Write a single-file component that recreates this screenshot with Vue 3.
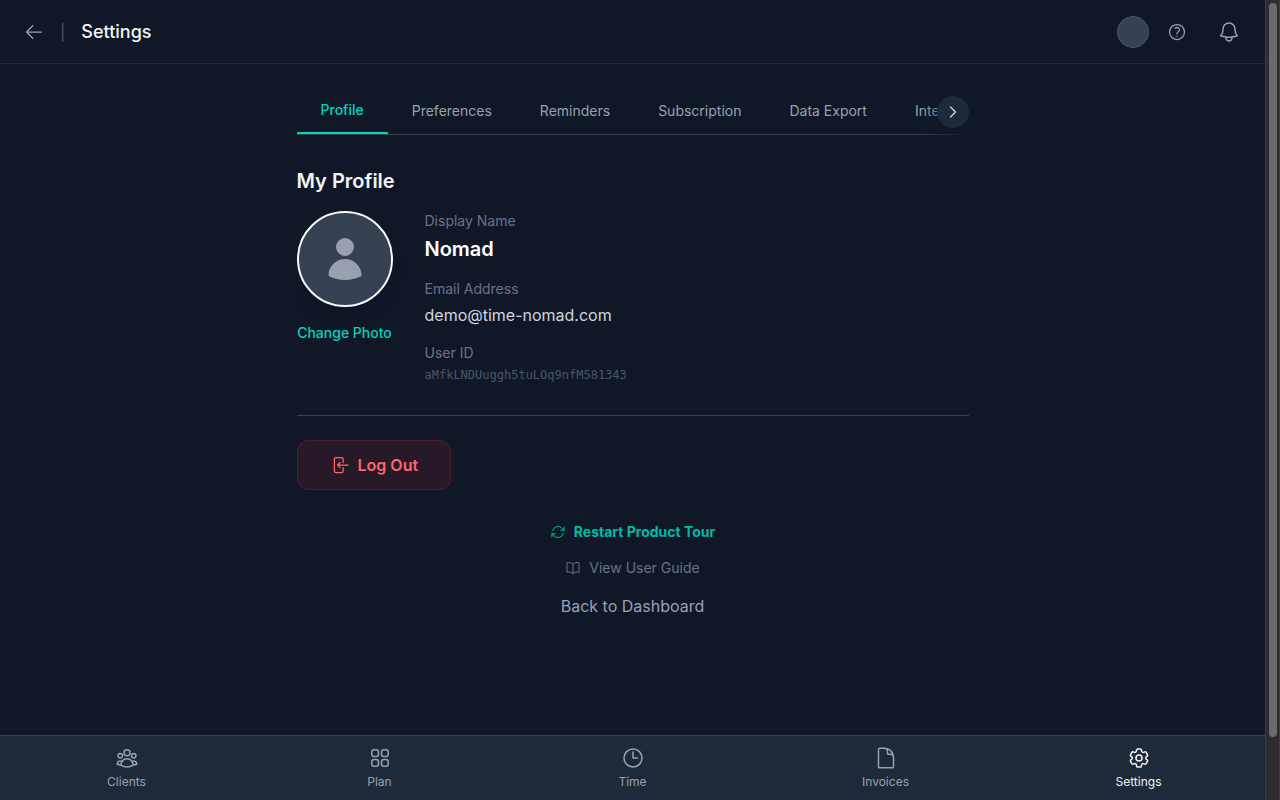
<template>
  <div class="app-shell">
    <div class="page">
      <header class="topbar">
        <div class="topbar-left">
          <button class="icon-btn" type="button" aria-label="Back">
            <svg class="icon icon-md" viewBox="0 0 24 24"><path d="M10.5 19.5 3 12m0 0 7.5-7.5M3 12h18" /></svg>
          </button>
          <span class="divider">|</span>
          <h1>Settings</h1>
        </div>
        <div class="topbar-right">
          <div class="account">
            <button class="avatar-small" type="button" aria-label="Account"></button>
            <button class="icon-btn help-btn" type="button" aria-label="Help">
              <svg class="icon icon-md" viewBox="0 0 24 24">
                <path d="M9.879 7.519c1.171-1.025 3.071-1.025 4.242 0 1.172 1.025 1.172 2.687 0 3.712-.203.179-.43.326-.67.442-.745.361-1.45.999-1.45 1.827v.75M21 12a9 9 0 1 1-18 0 9 9 0 0 1 18 0Zm-9 5.25h.008v.008H12v-.008Z" />
              </svg>
            </button>
          </div>
          <button class="icon-btn bell-btn" type="button" aria-label="Notifications">
            <svg class="icon icon-lg" viewBox="0 0 24 24">
              <path d="M14.857 17.082a23.848 23.848 0 0 0 5.454-1.31A8.967 8.967 0 0 1 18 9.75V9A6 6 0 0 0 6 9v.75a8.967 8.967 0 0 1-2.312 6.022c1.733.64 3.56 1.085 5.455 1.31m5.714 0a24.255 24.255 0 0 1-5.714 0m5.714 0a3 3 0 1 1-5.714 0" />
            </svg>
          </button>
        </div>
      </header>

      <main class="content">
        <div class="tabs-wrapper">
          <div ref="tabsEl" class="tabs">
            <button
              v-for="tab in tabs"
              :key="tab"
              type="button"
              class="tab"
              :class="{ active: tab === activeTab }"
              @click="activeTab = tab"
            >
              {{ tab }}
            </button>
          </div>
          <div class="tabs-fade"></div>
          <button class="scroll-btn" type="button" aria-label="More tabs" @click="scrollTabs">
            <svg class="icon icon-sm" viewBox="0 0 24 24"><path d="m8.25 4.5 7.5 7.5-7.5 7.5" /></svg>
          </button>
        </div>

        <section class="profile">
          <h2>My Profile</h2>
          <div class="profile-row">
            <div class="photo-column">
              <div class="avatar">
                <svg viewBox="0 0 24 24">
                  <path d="M7.5 6a4.5 4.5 0 1 1 9 0 4.5 4.5 0 0 1-9 0ZM3.751 20.105a8.25 8.25 0 0 1 16.498 0 .75.75 0 0 1-.437.695A18.683 18.683 0 0 1 12 22.5c-2.786 0-5.433-.608-7.812-1.7a.75.75 0 0 1-.437-.695Z" />
                </svg>
              </div>
              <button class="change-photo" type="button">Change Photo</button>
            </div>
            <dl class="details">
              <div>
                <dt>Display Name</dt>
                <dd class="display-name">{{ user.name }}</dd>
              </div>
              <div>
                <dt>Email Address</dt>
                <dd class="email">{{ user.email }}</dd>
              </div>
              <div>
                <dt>User ID</dt>
                <dd class="user-id">{{ user.id }}</dd>
              </div>
            </dl>
          </div>
        </section>

        <div class="logout-section">
          <button class="logout-btn" type="button">
            <svg class="icon icon-md" viewBox="0 0 24 24">
              <path d="M15.75 9V5.25A2.25 2.25 0 0 0 13.5 3h-6a2.25 2.25 0 0 0-2.25 2.25v13.5A2.25 2.25 0 0 0 7.5 21h6a2.25 2.25 0 0 0 2.25-2.25V15M12 9l-3 3m0 0 3 3m-3-3h12.75" />
            </svg>
            Log Out
          </button>
        </div>

        <div class="links">
          <button class="link-row tour" type="button">
            <svg class="icon icon-sm" viewBox="0 0 24 24">
              <path d="M16.023 9.348h4.992v-.001M2.985 19.644v-4.992m0 0h4.992m-4.993 0 3.181 3.183a8.25 8.25 0 0 0 13.803-3.7M4.031 9.865a8.25 8.25 0 0 1 13.803-3.7l3.181 3.182m0-4.991v4.99" />
            </svg>
            Restart Product Tour
          </button>
          <a class="link-row guide" href="#guide">
            <svg class="icon icon-sm" viewBox="0 0 24 24">
              <path d="M12 6.042A8.967 8.967 0 0 0 6 3.75c-1.052 0-2.062.18-3 .512v14.25A8.987 8.987 0 0 1 6 18c2.305 0 4.408.867 6 2.292m0-14.25a8.966 8.966 0 0 1 6-2.292c1.052 0 2.062.18 3 .512v14.25A8.987 8.987 0 0 0 18 18a8.967 8.967 0 0 0-6 2.292m0-14.25v14.25" />
            </svg>
            View User Guide
          </a>
          <a class="dashboard-link" href="#dashboard">Back to Dashboard</a>
        </div>
      </main>

      <nav class="bottom-nav">
        <a
          v-for="item in navItems"
          :key="item.label"
          :href="item.href"
          class="nav-item"
          :class="{ active: item.label === 'Settings' }"
        >
          <svg class="icon icon-lg" viewBox="0 0 24 24">
            <path v-for="(d, i) in item.paths" :key="i" :d="d" />
          </svg>
          <span>{{ item.label }}</span>
        </a>
      </nav>
    </div>

    <div class="scroll-track">
      <div class="scroll-thumb"></div>
    </div>
  </div>
</template>

<script setup>
import { ref } from 'vue'

const tabs = ['Profile', 'Preferences', 'Reminders', 'Subscription', 'Data Export', 'Integrations']
const activeTab = ref('Profile')
const tabsEl = ref(null)

const user = ref({
  name: 'Nomad',
  email: 'demo@time-nomad.com',
  id: 'aMfkLNDUuggh5tuLOq9nfM581343'
})

const navItems = [
  {
    label: 'Clients',
    href: '#clients',
    paths: [
      'M18 18.72a9.094 9.094 0 0 0 3.741-.479 3 3 0 0 0-4.682-2.72m.94 3.198.001.031c0 .225-.012.447-.037.666A11.944 11.944 0 0 1 12 21c-2.17 0-4.207-.576-5.963-1.584A6.062 6.062 0 0 1 6 18.719m12 0a5.971 5.971 0 0 0-.941-3.197m0 0A5.995 5.995 0 0 0 12 12.75a5.995 5.995 0 0 0-5.058 2.772m0 0a3 3 0 0 0-4.681 2.72 8.986 8.986 0 0 0 3.74.477m.94-3.197a5.971 5.971 0 0 0-.94 3.197M15 6.75a3 3 0 1 1-6 0 3 3 0 0 1 6 0Zm6 3a2.25 2.25 0 1 1-4.5 0 2.25 2.25 0 0 1 4.5 0Zm-13.5 0a2.25 2.25 0 1 1-4.5 0 2.25 2.25 0 0 1 4.5 0Z'
    ]
  },
  {
    label: 'Plan',
    href: '#plan',
    paths: [
      'M3.75 6A2.25 2.25 0 0 1 6 3.75h2.25A2.25 2.25 0 0 1 10.5 6v2.25a2.25 2.25 0 0 1-2.25 2.25H6a2.25 2.25 0 0 1-2.25-2.25V6Z',
      'M3.75 15.75A2.25 2.25 0 0 1 6 13.5h2.25a2.25 2.25 0 0 1 2.25 2.25V18a2.25 2.25 0 0 1-2.25 2.25H6A2.25 2.25 0 0 1 3.75 18v-2.25Z',
      'M13.5 6a2.25 2.25 0 0 1 2.25-2.25H18A2.25 2.25 0 0 1 20.25 6v2.25A2.25 2.25 0 0 1 18 10.5h-2.25a2.25 2.25 0 0 1-2.25-2.25V6Z',
      'M13.5 15.75a2.25 2.25 0 0 1 2.25-2.25H18a2.25 2.25 0 0 1 2.25 2.25V18A2.25 2.25 0 0 1 18 20.25h-2.25A2.25 2.25 0 0 1 13.5 18v-2.25Z'
    ]
  },
  {
    label: 'Time',
    href: '#time',
    paths: ['M12 6v6h4.5m4.5 0a9 9 0 1 1-18 0 9 9 0 0 1 18 0Z']
  },
  {
    label: 'Invoices',
    href: '#invoices',
    paths: [
      'M19.5 14.25v-2.625a3.375 3.375 0 0 0-3.375-3.375h-1.5A1.125 1.125 0 0 1 13.5 7.125v-1.5a3.375 3.375 0 0 0-3.375-3.375H8.25m2.25 0H5.625c-.621 0-1.125.504-1.125 1.125v17.25c0 .621.504 1.125 1.125 1.125h12.75c.621 0 1.125-.504 1.125-1.125V11.25a9 9 0 0 0-9-9Z'
    ]
  },
  {
    label: 'Settings',
    href: '#settings',
    paths: [
      'M9.594 3.94c.09-.542.56-.94 1.11-.94h2.593c.55 0 1.02.398 1.11.94l.213 1.281c.063.374.313.686.645.87.074.04.147.083.22.127.325.196.72.257 1.075.124l1.217-.456a1.125 1.125 0 0 1 1.37.49l1.296 2.247a1.125 1.125 0 0 1-.26 1.431l-1.003.827c-.293.241-.438.613-.43.992a7.723 7.723 0 0 1 0 .255c-.008.378.137.75.43.991l1.004.827c.424.35.534.955.26 1.43l-1.298 2.247a1.125 1.125 0 0 1-1.369.491l-1.217-.456c-.355-.133-.75-.072-1.076.124a6.47 6.47 0 0 1-.22.128c-.331.183-.581.495-.644.869l-.213 1.281c-.09.543-.56.94-1.11.94h-2.594c-.55 0-1.019-.398-1.11-.94l-.213-1.281c-.062-.374-.312-.686-.644-.87a6.52 6.52 0 0 1-.22-.127c-.325-.196-.72-.257-1.076-.124l-1.217.456a1.125 1.125 0 0 1-1.369-.49l-1.297-2.247a1.125 1.125 0 0 1 .26-1.431l1.004-.827c.292-.24.437-.613.43-.991a6.932 6.932 0 0 1 0-.255c.007-.38-.138-.751-.43-.992l-1.004-.827a1.125 1.125 0 0 1-.26-1.43l1.297-2.247a1.125 1.125 0 0 1 1.37-.491l1.216.456c.356.133.751.072 1.076-.124.072-.044.146-.086.22-.128.332-.183.582-.495.644-.869l.214-1.28Z',
      'M15 12a3 3 0 1 1-6 0 3 3 0 0 1 6 0Z'
    ]
  }
]

const scrollTabs = () => {
  tabsEl.value.scrollBy({ left: 200, behavior: 'smooth' })
}
</script>

<style>
body {
  background-color: #101828;
}
</style>

<style scoped>
.app-shell {
  display: flex;
  height: 100vh;
  background-color: #101828;
  color: #f3f4f6;
  font-family: Inter, 'Liberation Sans', sans-serif;
}

.page {
  flex: 1;
  min-width: 0;
  display: flex;
  flex-direction: column;
}

h1,
h2,
dl,
dd {
  margin: 0;
}

button {
  padding: 0;
  border: none;
  background: none;
  font-family: inherit;
  cursor: pointer;
}

a {
  text-decoration: none;
}

/* --- Icons --- */
.icon {
  flex-shrink: 0;
  fill: none;
  stroke: currentColor;
  stroke-width: 1.5;
  stroke-linecap: round;
  stroke-linejoin: round;
}

.icon-sm {
  width: 16px;
  height: 16px;
}

.icon-md {
  width: 20px;
  height: 20px;
}

.icon-lg {
  width: 24px;
  height: 24px;
}

/* --- Top bar --- */
.topbar {
  display: flex;
  align-items: center;
  justify-content: space-between;
  height: 63px;
  padding: 0 16px 0 24px;
  border-bottom: 1px solid #1e2939;
}

.topbar-left,
.topbar-right {
  display: flex;
  align-items: center;
  gap: 16px;
}

.account {
  display: flex;
  align-items: center;
  gap: 12px;
}

.icon-btn {
  display: flex;
  align-items: center;
  justify-content: center;
  color: #99a1af;
}

.help-btn {
  width: 32px;
  height: 32px;
}

.bell-btn {
  width: 40px;
  height: 40px;
}

.divider {
  color: #4a5565;
  font-size: 16px;
}

.topbar h1 {
  font-size: 18px;
  line-height: 28px;
  font-weight: 500;
}

.avatar-small {
  width: 32px;
  height: 32px;
  border: 1px solid #4a5565;
  border-radius: 50%;
  background-color: #364153;
}

/* --- Content --- */
.content {
  flex: 1;
  min-height: 0;
  overflow: hidden;
  width: 100%;
  max-width: 672px;
  margin: 0 auto;
  padding-top: 24px;
}

/* --- Tabs --- */
.tabs-wrapper {
  position: relative;
}

.tabs {
  display: flex;
  align-items: center;
  overflow-x: auto;
  scrollbar-width: none;
  border-bottom: 1px solid #364153;
}

.tab {
  flex-shrink: 0;
  padding: 12px 24px;
  color: #99a1af;
  font-size: 14px;
  line-height: 20px;
  font-weight: 400;
}

.tab.active {
  color: #00d5be;
  font-weight: 500;
  border-bottom: 2px solid #00d5be;
}

.tabs-fade {
  position: absolute;
  top: 0;
  right: 0;
  bottom: 0;
  width: 48px;
  background: linear-gradient(to left, #101828, transparent);
  pointer-events: none;
}

.scroll-btn {
  position: absolute;
  top: 50%;
  right: 0;
  display: flex;
  align-items: center;
  justify-content: center;
  width: 32px;
  height: 32px;
  border-radius: 50%;
  background-color: #1e2939;
  color: #d1d5dc;
  transform: translateY(-50%);
}

.scroll-btn .icon {
  stroke-width: 2;
}

/* --- Profile --- */
.profile {
  padding: 32px 0;
  border-bottom: 1px solid #364153;
}

.profile h2 {
  margin-bottom: 16px;
  font-size: 20px;
  line-height: 28px;
  font-weight: 600;
}

.profile-row {
  display: flex;
  align-items: flex-start;
  gap: 32px;
}

.photo-column {
  display: flex;
  flex-direction: column;
  align-items: center;
  gap: 16px;
}

.avatar {
  box-sizing: border-box;
  display: flex;
  align-items: center;
  justify-content: center;
  width: 96px;
  height: 96px;
  border: 2px solid #f9fafb;
  border-radius: 50%;
  background-color: #364153;
  box-shadow: 0 10px 15px -3px rgba(0, 0, 0, 0.1), 0 4px 6px -4px rgba(0, 0, 0, 0.1);
}

.avatar svg {
  width: 48px;
  height: 48px;
  fill: #99a1af;
}

.change-photo {
  color: #00d5be;
  font-size: 14px;
  line-height: 20px;
  font-weight: 500;
}

.details {
  display: flex;
  flex-direction: column;
  gap: 16px;
}

.details dt {
  margin-bottom: 4px;
  color: #6a7282;
  font-size: 14px;
  line-height: 20px;
}

.display-name {
  color: #ffffff;
  font-size: 20px;
  line-height: 28px;
  font-weight: 600;
}

.email {
  color: #d1d5dc;
  font-size: 16px;
  line-height: 24px;
}

.user-id {
  color: #4a5565;
  font-family: 'DejaVu Sans Mono', 'Liberation Mono', monospace;
  font-size: 12px;
  line-height: 16px;
}

/* --- Log out --- */
.logout-section {
  padding: 24px 0 32px;
}

.logout-btn {
  display: flex;
  align-items: center;
  gap: 8px;
  padding: 12px 32px;
  border: 1px solid rgba(251, 44, 54, 0.2);
  border-radius: 12px;
  background-color: rgba(251, 44, 54, 0.1);
  color: #ff6467;
  font-size: 16px;
  line-height: 24px;
  font-weight: 600;
}

/* --- Links --- */
.links {
  display: flex;
  flex-direction: column;
  align-items: center;
  gap: 16px;
}

.link-row {
  display: flex;
  align-items: center;
  gap: 8px;
  font-size: 14px;
  line-height: 20px;
}

.tour {
  color: #00bba7;
  font-weight: 700;
}

.guide {
  color: #6a7282;
}

.dashboard-link {
  color: #99a1af;
  font-size: 16px;
  line-height: 24px;
}

/* --- Bottom navigation --- */
.bottom-nav {
  display: flex;
  border-top: 1px solid #364153;
  background-color: #1e2939;
}

.nav-item {
  flex: 1;
  display: flex;
  flex-direction: column;
  align-items: center;
  gap: 4px;
  padding: 10px 0;
  color: #99a1af;
  font-size: 12px;
  line-height: 16px;
}

.nav-item.active {
  color: #f3f4f6;
}

/* --- Scrollbar --- */
.scroll-track {
  box-sizing: border-box;
  width: 15px;
  padding: 3px 2px 3px 3px;
  border-left: 1px solid #3e3e3e;
  border-right: 1px solid #3e3e3e;
  background-color: #2c2c2c;
}

.scroll-thumb {
  height: calc(100% * 37 / 40);
  border-radius: 4px;
  background-color: #6b6b6b;
}
</style>
